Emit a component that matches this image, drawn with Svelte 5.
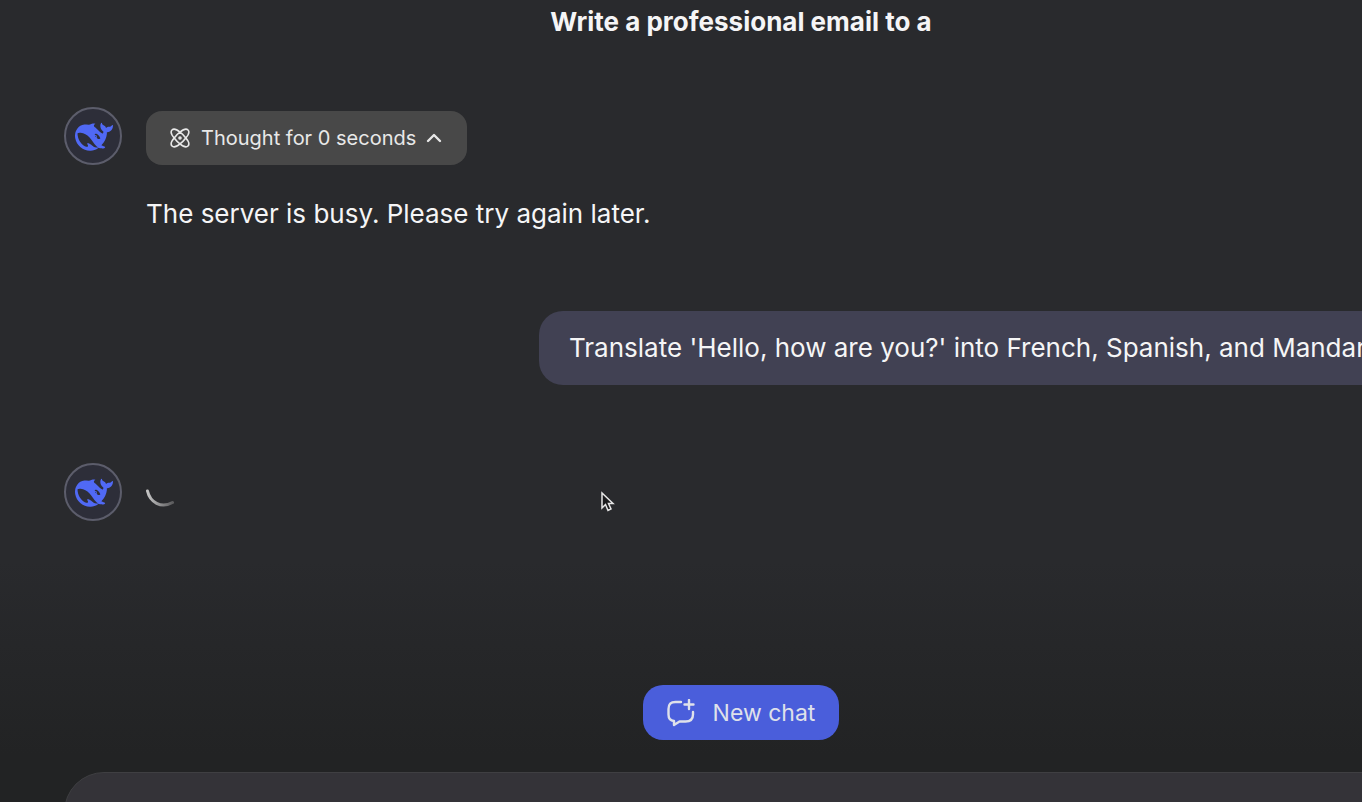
<script>
  const title = 'Write a professional email to a';
  const reply = 'The server is busy. Please try again later.';
  const prompt = "Translate 'Hello, how are you?' into French, Spanish, and Mandarin";

  let expanded = $state(true);
</script>

{#snippet avatar()}
  <div class="avatar">
    <svg class="whale" viewBox="0 0 24 24" aria-hidden="true">
      <path d="M23.748 4.482c-.254-.124-.364.113-.512.234-.051.039-.094.09-.137.136-.372.397-.806.657-1.373.626-.829-.046-1.537.214-2.163.848-.133-.782-.575-1.248-1.247-1.548-.352-.156-.708-.311-.955-.65-.172-.241-.219-.51-.305-.774-.055-.16-.11-.323-.293-.35-.2-.031-.278.136-.356.276-.313.572-.434 1.202-.422 1.84.027 1.436.633 2.58 1.838 3.393.137.093.172.187.129.323-.082.28-.18.552-.266.833-.055.179-.137.217-.329.14a5.526 5.526 0 01-1.736-1.18c-.857-.828-1.631-1.742-2.597-2.458a11.365 11.365 0 00-.689-.471c-.985-.957.13-1.743.388-1.836.27-.098.093-.432-.779-.428-.872.004-1.67.295-2.687.684a3.055 3.055 0 01-.465.137 9.597 9.597 0 00-2.883-.102c-1.885.21-3.39 1.102-4.497 2.623C.082 8.606-.231 10.684.152 12.85c.403 2.284 1.569 4.175 3.36 5.653 1.858 1.533 3.997 2.284 6.438 2.14 1.482-.085 3.133-.284 4.994-1.86.47.234.962.327 1.78.397.63.059 1.236-.03 1.705-.128.735-.156.684-.837.419-.961-2.155-1.004-1.682-.595-2.113-.926 1.096-1.296 2.746-2.642 3.392-7.003.05-.347.007-.565 0-.845-.004-.17.035-.237.23-.256a4.173 4.173 0 001.545-.475c1.396-.763 1.96-2.015 2.093-3.517.02-.23-.004-.467-.247-.588zM11.581 18c-2.089-1.642-3.102-2.183-3.52-2.16-.392.024-.321.471-.235.763.09.288.207.486.371.739.114.167.192.416-.113.603-.673.416-1.842-.14-1.897-.167-1.361-.802-2.5-1.86-3.301-3.307-.774-1.393-1.224-2.887-1.298-4.482-.02-.386.093-.522.477-.592a4.696 4.696 0 011.529-.039c2.132.312 3.946 1.265 5.468 2.774.868.86 1.525 1.887 2.202 2.891.72 1.066 1.494 2.082 2.48 2.914.348.292.625.514.891.677-.802.09-2.14.11-3.054-.614zm1-6.44a.306.306 0 01.415-.287.302.302 0 01.2.288.306.306 0 01-.31.307.303.303 0 01-.304-.308zm3.11 1.596c-.2.081-.399.151-.59.16a1.245 1.245 0 01-.798-.254c-.274-.23-.47-.358-.552-.758a1.73 1.73 0 01.016-.588c.07-.327-.008-.537-.239-.727-.187-.156-.426-.199-.688-.199a.559.559 0 01-.254-.078c-.11-.054-.2-.191-.114-.358.028-.054.16-.186.192-.21.356-.202.767-.136 1.146.016.352.144.618.408 1.001.782.391.451.462.576.685.914.176.265.336.537.445.848.067.195-.019.354-.25.452z" />
    </svg>
  </div>
{/snippet}

<div class="chat-page">
  <div class="column">
    <h1 class="title">{title}</h1>

    <!-- Messages -->
    <main class="messages">
      <div class="message">
        {@render avatar()}
        <div class="message-body">
          <button class="thought-btn" aria-expanded={expanded} onclick={() => (expanded = !expanded)}>
            <svg class="atom" viewBox="0 0 20 20" aria-hidden="true">
              <path d="M10 4.200C13.500 1.200 16.600.6 18 2s.8 4.500-2.200 8c3 3.500 3.600 6.600 2.200 8s-4.500.8-8-2.200c-3.500 3-6.600 3.600-8 2.200s-.8-4.500 2.200-8C1.200 6.500.6 3.400 2 2s4.500-.8 8 2.200z" />
              <path d="M10 4.200C12.500 6 14 7.500 15.800 10 14 12.500 12.500 14 10 15.800 7.500 14 6 12.500 4.200 10 6 7.500 7.500 6 10 4.200z" />
              <circle cx="10" cy="10" r="1" />
            </svg>
            <span>Thought for 0 seconds</span>
            <svg class="chevron" class:closed={!expanded} viewBox="0 0 16 16" aria-hidden="true">
              <path d="M2 11 8 5l6 6" />
            </svg>
          </button>
          <p class="reply">{reply}</p>
        </div>
      </div>

      <div class="bubble">{prompt}</div>

      <div class="message">
        {@render avatar()}
        <svg class="spinner" viewBox="0 0 30 30" role="img" aria-label="Loading">
          <defs>
            <linearGradient id="arc" x1="0" x2="1" y1="0" y2="0">
              <stop offset="0" stop-color="#c4c4c4" />
              <stop offset="1" stop-color="#5c5c5e" />
            </linearGradient>
          </defs>
          <path d="M1.500 11C4 22 15 29 26.500 22.500" stroke="url(#arc)" />
        </svg>
      </div>
    </main>

    <!-- Bottom area -->
    <footer class="footer">
      <button class="new-chat">
        <svg class="new-chat-icon" viewBox="0 0 28 28" aria-hidden="true">
          <path d="M14 3H8.500Q1.500 3 1.500 10v5.500Q1.500 21.500 7 22v4l5.500-3.500h6q7.500 0 7.500-7V13" />
          <path d="M22 1v9M17.500 5.500h9" />
        </svg>
        <span>New chat</span>
      </button>
      <div class="composer"></div>
    </footer>
  </div>

  <svg class="pointer" viewBox="0 0 16 22" aria-hidden="true">
    <path d="M2 2v15l3.500-3.500 2.500 6 3-1.500-2.500-5.500H13z" />
  </svg>
</div>

<style>
  :global(body) {
    margin: 0;
    background: #292a2d;
  }

  .chat-page {
    position: relative;
    min-height: 100vh;
    display: flex;
    overflow: hidden;
    background: linear-gradient(#292a2d 0, #292a2d 70%, #222324 94%);
    color: #f5f5f6;
    font-family: Inter, "Liberation Sans", sans-serif;
    font-size: 26px;
    line-height: 36px;
  }

  .column {
    flex: 1;
    display: flex;
    flex-direction: column;
    margin-left: 64px;
    margin-right: -56px;
  }

  .title {
    margin: 4px 0 67px;
    font-size: 26px;
    font-weight: 700;
    line-height: 36px;
    text-align: center;
  }

  .messages {
    flex: 1;
    display: flex;
    flex-direction: column;
    gap: 78px;
  }

  .message {
    display: flex;
    align-items: flex-start;
    gap: 24px;
  }

  .avatar {
    width: 58px;
    height: 58px;
    flex-shrink: 0;
    display: flex;
    align-items: center;
    justify-content: center;
    box-sizing: border-box;
    padding: 2px 0 0 2px;
    border: 2px solid #5c5d6b;
    border-radius: 50%;
    background: #2d2e39;
  }

  .whale {
    width: 38px;
    height: 38px;
    flex-shrink: 0;
    fill: #5069f5;
  }

  .message-body {
    padding-top: 4px;
  }

  .thought-btn {
    display: flex;
    align-items: center;
    height: 54px;
    padding: 0 25px 0 24px;
    border: 0;
    border-radius: 16px;
    background: #484848;
    color: #e8e8e8;
    font-family: inherit;
    font-size: 20px;
    cursor: pointer;
  }

  .atom {
    width: 20px;
    height: 20px;
    margin-right: 11px;
    fill: none;
    stroke: currentColor;
    stroke-width: 1.6;
    stroke-linejoin: round;
  }

  .chevron {
    width: 16px;
    height: 16px;
    margin-left: 10px;
    fill: none;
    stroke: currentColor;
    stroke-width: 2.4;
    stroke-linecap: round;
    stroke-linejoin: round;
  }

  .chevron.closed {
    transform: rotate(180deg);
  }

  .reply {
    margin: 31px 0 1px;
  }

  .bubble {
    align-self: flex-end;
    padding: 19px 30px;
    border-radius: 24px;
    background: #414153;
    white-space: nowrap;
  }

  .spinner {
    width: 30px;
    height: 30px;
    margin-top: 17px;
    fill: none;
    stroke-width: 3;
    stroke-linecap: round;
  }

  .footer {
    display: flex;
    flex-direction: column;
    align-items: center;
    gap: 32px;
  }

  .new-chat {
    display: flex;
    align-items: center;
    gap: 18px;
    height: 55px;
    padding: 0 24px;
    border: 0;
    border-radius: 20px;
    background: #4a5edb;
    color: #dfe1ea;
    font-family: inherit;
    font-size: 23px;
    cursor: pointer;
  }

  .new-chat-icon {
    width: 28px;
    height: 28px;
    fill: none;
    stroke: currentColor;
    stroke-width: 2.4;
    stroke-linecap: round;
    stroke-linejoin: round;
  }

  /* runs off below the fold */
  .composer {
    align-self: stretch;
    height: 80px;
    margin-bottom: -50px;
    box-sizing: border-box;
    border: 1px solid #3f3f42;
    border-radius: 40px;
    background: #343338;
  }

  /* mouse pointer over the page */
  .pointer {
    position: absolute;
    left: 600px;
    top: 491px;
    width: 16px;
    height: 22px;
    fill: #1b1b1d;
    stroke: #e6e6e6;
    stroke-width: 1.5;
  }
</style>
